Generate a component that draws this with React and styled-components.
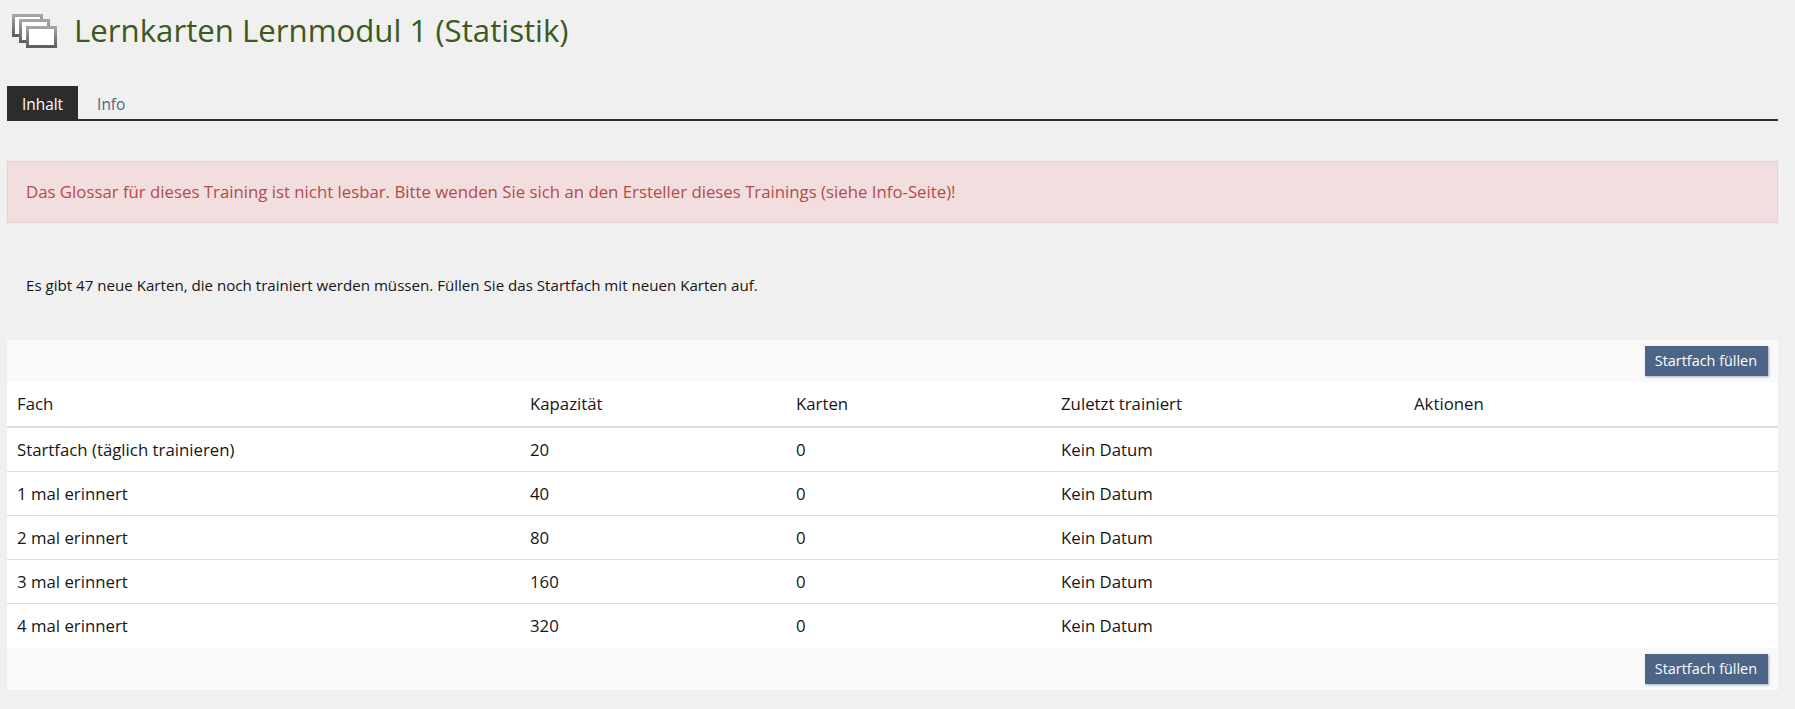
import React from 'react';
import styled, { createGlobalStyle } from 'styled-components';

const Global = createGlobalStyle`
  html, body { margin: 0; padding: 0; background: #f0f0f0; }
  body { font-family: "Open Sans", "Liberation Sans", sans-serif; font-size: 16.8px; color: #161616; }
`
const Page = styled.div`
  padding: 0 17px 0 7px;
  height: 709px;
  box-sizing: border-box;
  overflow: hidden;
`
const Header = styled.div`
  display: flex;
  align-items: center;
  height: 60px;
  padding-left: 5px;
  gap: 16px;
`
const Title = styled.h1`
  margin: 0;
  font-size: 31.2px;
  font-weight: 400;
  line-height: 60px;
  color: #3a5a20;
`
const Tabs = styled.div`
  display: flex;
  margin-top: 26px;
  height: 33px;
  border-bottom: 2px solid #2c2c2c;
`
const Tab = styled.div`
  padding: 0 15px;
  margin-left: ${p => (p.$active ? '0' : '4px')};
  line-height: 37px;
  font-size: 15.4px;
  color: ${p => (p.$active ? '#fff' : '#4c6586')};
  background: ${p => (p.$active ? '#2c2c2c' : 'transparent')};
`
const Alert = styled.div`
  margin-top: 40px;
  height: 62px;
  box-sizing: border-box;
  padding: 0 18px;
  line-height: 60px;
  font-size: 16.8px;
  color: #b54a4a;
  background: #f2dede;
  border: 1px solid #ebccd1;
`
const Info = styled.p`
  margin: 53px 0 0;
  padding-left: 19px;
  height: 20px;
  line-height: 19px;
  font-size: 15.12px;
`
const Panel = styled.div`
  margin-top: 44px;
`
const Toolbar = styled.div`
  display: flex;
  justify-content: flex-end;
  align-items: center;
  height: 42px;
  padding-right: 10px;
  background: #f9f9f9;
`
const Button = styled.button`
  height: 30px;
  padding: 0 11px 2px 10px;
  border: 0;
  font-family: inherit;
  font-size: 14.4px;
  color: #fff;
  background: #4c6586;
  box-shadow: 1px 1px 2px rgba(76, 101, 134, 0.5);
`
const Table = styled.table`
  width: 100%;
  table-layout: fixed;
  border-collapse: separate;
  border-spacing: 0;
  background: #fff;
`
const Th = styled.th`
  box-sizing: border-box;
  height: 46px;
  padding: 0 10px 2px;
  text-align: left;
  font-weight: 400;
  font-size: 16.8px;
  border-bottom: 2px solid #dddddd;
`
const Td = styled.td`
  box-sizing: border-box;
  height: 44px;
  padding: 0 10px 1px;
  font-size: 16.8px;
`
const Row = styled.tr`
  &:not(:last-child) td { border-bottom: 1px solid #dddddd; }
`

const StackIcon = () => (
  <svg width="46" height="36" viewBox="0 0 46 36">
    <defs>
      <linearGradient id="frame" x1="0" y1="0" x2="0" y2="1">
        <stop offset="0" stopColor="#a5a5a5" />
        <stop offset="1" stopColor="#5e5e5e" />
      </linearGradient>
    </defs>
    <rect x="1.5" y="3.5" width="28" height="20" fill="#fff" stroke="url(#frame)" strokeWidth="3" />
    <rect x="8.5" y="8.5" width="28" height="21" fill="#fff" stroke="url(#frame)" strokeWidth="3" />
    <rect x="15.5" y="15.5" width="28" height="19" fill="#fff" stroke="url(#frame)" strokeWidth="3" />
  </svg>
)

const columns = ['Fach', 'Kapazität', 'Karten', 'Zuletzt trainiert', 'Aktionen'];
const widths = [513, 266, 265, 353, 374];
const rows = [
  ['Startfach (täglich trainieren)', 20],
  ['1 mal erinnert', 40],
  ['2 mal erinnert', 80],
  ['3 mal erinnert', 160],
  ['4 mal erinnert', 320],
];

const App = () => (
  <Page>
    <Global />
    <Header>
      <StackIcon />
      <Title>Lernkarten Lernmodul 1 (Statistik)</Title>
    </Header>
    <Tabs>
      <Tab $active>Inhalt</Tab>
      <Tab>Info</Tab>
    </Tabs>
    <Alert>Das Glossar für dieses Training ist nicht lesbar. Bitte wenden Sie sich an den Ersteller dieses Trainings (siehe Info-Seite)!</Alert>
    <Info>Es gibt 47 neue Karten, die noch trainiert werden müssen. Füllen Sie das Startfach mit neuen Karten auf.</Info>
    <Panel>
      <Toolbar><Button>Startfach füllen</Button></Toolbar>
      <Table>
        <colgroup>
          {widths.map(w => <col key={w} width={w} />)}
        </colgroup>
        <thead>
          <tr>{columns.map(c => <Th key={c}>{c}</Th>)}</tr>
        </thead>
        <tbody>
          {rows.map(([name, cap]) => (
            <Row key={name}>
              <Td>{name}</Td>
              <Td>{cap}</Td>
              <Td>0</Td>
              <Td>Kein Datum</Td>
              <Td></Td>
            </Row>
          ))}
        </tbody>
      </Table>
      <Toolbar><Button>Startfach füllen</Button></Toolbar>
    </Panel>
  </Page>
);

export default App;
